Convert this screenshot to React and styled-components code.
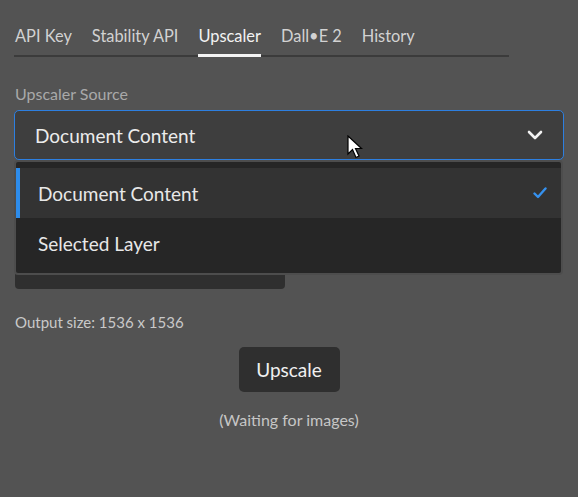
import React from "react";
import styled, { createGlobalStyle } from "styled-components";

const Global = createGlobalStyle`
  html, body { margin: 0; padding: 0; background: #535353; }
  body { font-family: Lato, "Open Sans", sans-serif; color: #e8e8e8; }
  * { box-sizing: border-box; }
`;

const Page = styled.div`
  position: relative;
  width: 578px;
  height: 497px;
  padding: 25px 14px 0 14px;
  background: #535353;
`;

const Tabs = styled.div`
  display: flex;
  gap: 20px;
  width: 495px;
  border-bottom: 2px solid #3b3b3b;
  padding-left: 1px;
`;

const Tab = styled.div`
  font-size: 16.4px;
  line-height: 22px;
  padding-bottom: 7px;
  margin-bottom: -2px;
  color: ${(p) => (p.$active ? "#f2f2f2" : "#d2d2d2")};
  border-bottom: 3px solid ${(p) => (p.$active ? "#f4f4f4" : "transparent")};
`;

const Label = styled.div`
  font-size: 16px;
  line-height: 20px;
  color: #a9a9a9;
  padding-left: 1px;
  margin-top: 27px;
`;

const SelectWrap = styled.div`
  position: relative;
  margin-top: 6px;
`;

const SelectBox = styled.div`
  height: 50px;
  display: flex;
  align-items: center;
  justify-content: space-between;
  padding: 0 20px 0 20px;
  background: #3e3e3e;
  border: 1px solid #2d7fe0;
  border-radius: 5px;
  font-size: 19px;
  color: #ececec;
`;

const Popover = styled.div`
  position: absolute;
  top: 50px;
  left: 0;
  right: 1px;
  z-index: 2;
  background: #262626;
  border: 2px solid #4d4d4d;
  border-radius: 4px;
  padding: 6px 0 5px 0;
`;

const Item = styled.div`
  height: 50px;
  display: flex;
  align-items: center;
  justify-content: space-between;
  padding: 0 14px 0 18px;
  font-size: 19px;
  color: #e8e8e8;
  background: ${(p) => (p.$selected ? "#333333" : "transparent")};
  border-left: 4px solid ${(p) => (p.$selected ? "#2d8ceb" : "transparent")};
`;

const Picker = styled.div`
  width: 270px;
  height: 40px;
  margin-top: 89px;
  margin-left: 1px;
  display: flex;
  align-items: flex-end;
  padding: 0 0 10px 18px;
  background: #2f2f2f;
  border-radius: 4px;
  font-size: 16px;
  line-height: 20px;
  color: #e8e8e8;
`;

const Info = styled.div`
  margin-top: 23px;
  padding-left: 1px;
  font-size: 15px;
  line-height: 20px;
  color: #c9c9c9;
`;

const Center = styled.div`
  display: flex;
  flex-direction: column;
  align-items: center;
  margin-top: ${(p) => p.$mt || 0}px;
`;

const Button = styled.button`
  width: 101px;
  height: 45px;
  border: none;
  border-radius: 5px;
  background: #2f2f2f;
  color: #f0f0f0;
  font-family: inherit;
  font-size: 19px;
`;

const Waiting = styled.div`
  font-size: 16px;
  line-height: 20px;
  color: #c6c6c6;
`;

const Cursor = styled.svg`
  position: absolute;
  left: 347px;
  top: 135px;
  z-index: 3;
`;

const Chevron = () => (
  <svg width="16" height="10" viewBox="0 0 16 10">
    <path d="M2 2 L8 8 L14 2" fill="none" stroke="#f2f2f2" strokeWidth="2.6" strokeLinecap="round" strokeLinejoin="round" />
  </svg>
);

const Check = () => (
  <svg width="14" height="12" viewBox="0 0 14 12">
    <path d="M1.5 6.5 L5 10 L12.5 1.5" fill="none" stroke="#3591ef" strokeWidth="2.4" strokeLinecap="round" strokeLinejoin="round" />
  </svg>
);

export default function App() {
  return (
    <>
      <Global />
      <Page>
        <Tabs>
          <Tab>API Key</Tab>
          <Tab>Stability API</Tab>
          <Tab $active>Upscaler</Tab>
          <Tab>Dall•E 2</Tab>
          <Tab>History</Tab>
        </Tabs>
        <Label>Upscaler Source</Label>
        <SelectWrap>
          <SelectBox>
            <span>Document Content</span>
            <Chevron />
          </SelectBox>
          <Popover>
            <Item $selected>
              <span>Document Content</span>
              <Check />
            </Item>
            <Item>
              <span>Selected Layer</span>
            </Item>
          </Popover>
        </SelectWrap>
        <Picker>2x</Picker>
        <Info>Output size: 1536 x 1536</Info>
        <Center $mt={15}>
          <Button>Upscale</Button>
        </Center>
        <Center $mt={18}>
          <Waiting>(Waiting for images)</Waiting>
        </Center>
        <Cursor width="20" height="26" viewBox="0 0 20 26">
          <path d="M1 1 L1 19 L5.5 14.5 L9 22.5 L12 21 L8.5 13.5 L14.5 13.5 Z" fill="#ffffff" stroke="#000000" strokeWidth="1.2" strokeLinejoin="miter" />
        </Cursor>
      </Page>
    </>
  );
}
